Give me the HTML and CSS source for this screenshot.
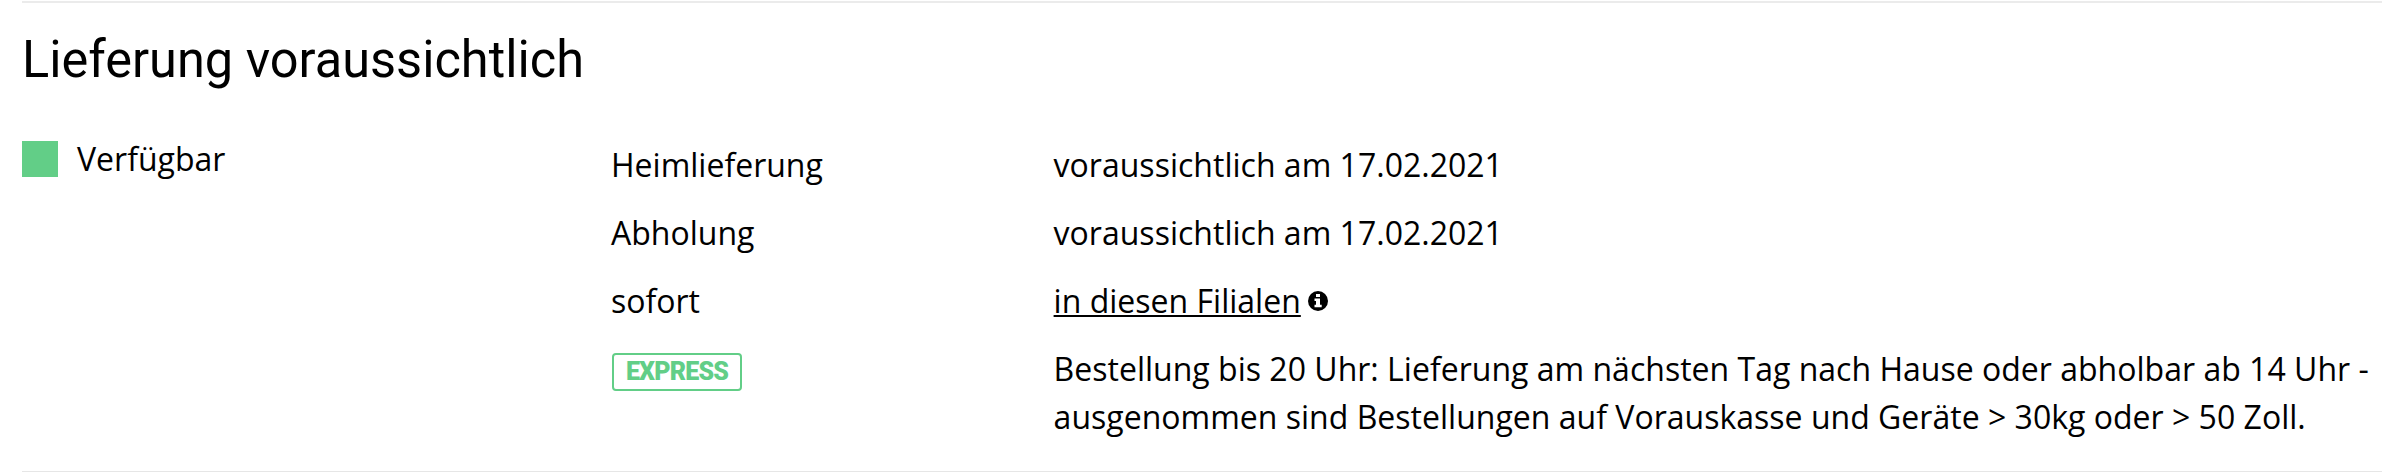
FILE: index.html
```
<!DOCTYPE html>
<html lang="de"><head><meta charset="utf-8"><title>Lieferung</title><link rel="stylesheet" href="styles.css"></head>
<body>
<section class="delivery">
<h2 class="title"><svg class="title-svg" width="620" height="110"><text x="0" y="74" textLength="562" lengthAdjust="spacingAndGlyphs">Lieferung voraussichtlich</text></svg></h2>
<div class="content">
<div class="status"><span class="square"></span><span>Verfügbar</span></div>
<dl class="options">
<dt>Heimlieferung</dt><dd>voraussichtlich am 17.02.2021</dd>
<dt>Abholung</dt><dd>voraussichtlich am 17.02.2021</dd>
<dt>sofort</dt><dd class="stores"><a class="link">in diesen Filialen</a><svg class="info" viewBox="0 0 20 20"><circle cx="10" cy="10" r="10"/><path d="M8 3h4v3H8zM6.5 7.5H12v6.3h1.7v2.4H6.5v-2.4H8V10H6.5z" fill="#fff"/></svg></dd>
<dt class="express"><span class="badge">EXPRESS</span></dt><dd>Bestellung bis 20 Uhr: Lieferung am nächsten Tag nach Hause oder abholbar ab 14 Uhr -<br>ausgenommen sind Bestellungen auf Vorauskasse und Geräte &gt; 30kg oder &gt; 50 Zoll.</dd>
</dl>
</div>
</section>
</body></html>
```
FILE: styles.css
```
*{box-sizing:border-box}
body{margin:0;padding-top:1px;background:#fff;color:#000;font:32px/48px "Open Sans",sans-serif}
.delivery{margin:0 16px 0 22px;height:471px;border-top:2px solid #ebebeb;border-bottom:1px solid #e6e6e6}
.title{margin:0;height:132px;font:400 52px "Roboto",sans-serif}
.title-svg{display:block;overflow:visible}
.content{display:grid;grid-template-columns:589px 1fr}
.status{display:flex;gap:19px;align-items:center;height:48px}
.square{width:36px;height:36px;background:#62ce87}
.options{display:grid;grid-template-columns:442.6px 1fr;row-gap:20px;margin:6px 0 0}
dt,dd{margin:0;white-space:nowrap}
dd{letter-spacing:.012px}
.stores{display:flex;align-items:flex-start}
.link{text-decoration:underline;text-decoration-thickness:2px;text-underline-offset:2px}
.info{width:20px;height:20px;margin:14px 0 0 7.5px}
.express{display:flex;align-items:flex-start}
.badge{width:130px;height:38px;margin:8px 0 0 1px;border:2px solid #62ce87;border-radius:4px;color:#62ce87;font:900 25px/34px Roboto,sans-serif;letter-spacing:-.8px;text-align:center}
```
